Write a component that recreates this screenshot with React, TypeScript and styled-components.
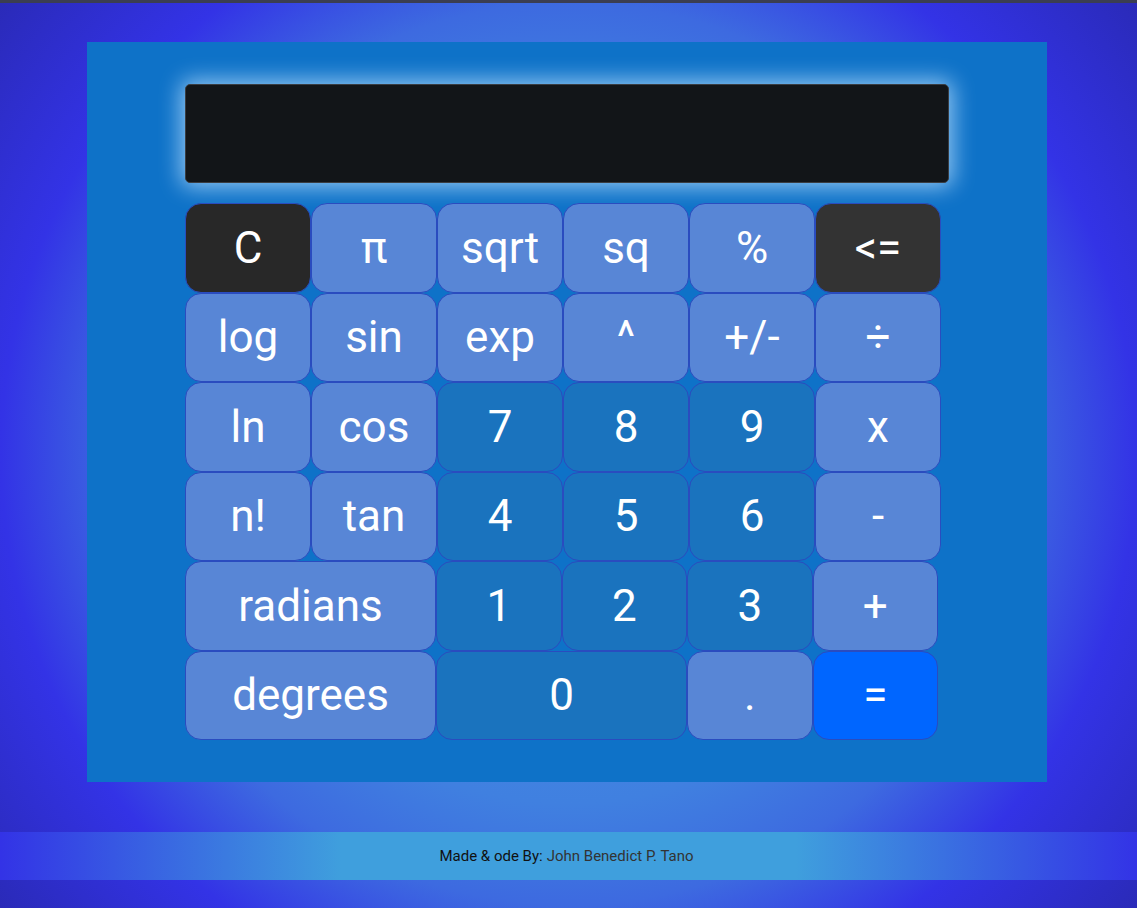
import styled, { createGlobalStyle } from 'styled-components'

const GlobalStyle = createGlobalStyle`
  html, body {
    margin: 0;
    padding: 0;
  }

  body {
    min-height: 100vh;
    box-sizing: border-box;
    border-top: 3px solid #3b3e52;
    font-family: Roboto, 'Liberation Sans', sans-serif;
    background: radial-gradient(
      circle at 50% 50%,
      #4a95e2 0%,
      #4080e0 48%,
      #3d6ae0 62%,
      #3333e6 78%,
      #2a2ab8 100%
    );
    background-attachment: fixed;
  }
`

const Page = styled.div`
  display: flex;
  flex-direction: column;
  align-items: center;
  padding-top: 39px;
`

const Calculator = styled.div`
  width: 960px;
  margin-right: 3px;
  box-sizing: border-box;
  padding: 42px 98px;
  background: #0e72c8;
  display: flex;
  flex-direction: column;
  gap: 20px;
`

const Display = styled.div`
  height: 99px;
  box-sizing: border-box;
  background: #121518;
  border: 1px solid #3a3d42;
  border-radius: 5px;
  box-shadow: 0 0 22px 4px rgba(190, 225, 255, 0.75);
`

const Keypad = styled.div`
  display: flex;
  flex-direction: column;
`

const Row = styled.div`
  display: flex;
`

type Kind = 'fn' | 'num' | 'clear' | 'back' | 'equals'

const colors: Record<Kind, string> = {
  fn: '#5886d6',
  num: '#1a73be',
  clear: '#282828',
  back: '#333333',
  equals: '#0066ff',
}

const Key = styled.button<{ $kind: Kind; $w: number }>`
  width: ${({ $w }) => $w}px;
  height: 89.5px;
  flex: 0 0 auto;
  box-sizing: border-box;
  border: 1px solid #2a4cbf;
  border-radius: 16px;
  background: ${({ $kind }) => colors[$kind]};
  color: #ffffff;
  font-family: Roboto, 'Liberation Sans', sans-serif;
  font-size: 44px;
  padding: 0;
  line-height: 1;
  cursor: pointer;
`

const Footer = styled.footer`
  margin-top: 50px;
  align-self: stretch;
  height: 48px;
  padding-right: 4px;
  display: flex;
  align-items: center;
  justify-content: center;
  background: linear-gradient(
    to right,
    #3333e6 0%,
    #3f9fdd 30%,
    #3f9fdd 70%,
    #3333e6 100%
  );
  font-size: 15px;
  color: #111111;
`

const Author = styled.span`
  color: #333333;
  margin-left: 4px;
`

type KeyDef = [string, Kind, number?]

const rows: KeyDef[][] = [
  [['C', 'clear'], ['π', 'fn'], ['sqrt', 'fn'], ['sq', 'fn'], ['%', 'fn'], ['<=', 'back']],
  [['log', 'fn'], ['sin', 'fn'], ['exp', 'fn'], ['^', 'fn'], ['+/-', 'fn'], ['÷', 'fn']],
  [['ln', 'fn'], ['cos', 'fn'], ['7', 'num'], ['8', 'num'], ['9', 'num'], ['x', 'fn']],
  [['n!', 'fn'], ['tan', 'fn'], ['4', 'num'], ['5', 'num'], ['6', 'num'], ['-', 'fn']],
  [['radians', 'fn', 251], ['1', 'num'], ['2', 'num'], ['3', 'num'], ['+', 'fn']],
  [['degrees', 'fn', 251], ['0', 'num', 251], ['.', 'fn'], ['=', 'equals']],
]

export default function App() {
  return (
    <>
      <GlobalStyle />
      <Page>
        <Calculator>
          <Display />
          <Keypad>
            {rows.map((row, i) => (
              <Row key={i}>
                {row.map(([label, kind, w]) => (
                  <Key key={label} $kind={kind} $w={w ?? (i < 4 ? 126 : 125.5)}>
                    {label}
                  </Key>
                ))}
              </Row>
            ))}
          </Keypad>
        </Calculator>
        <Footer>
          Made &amp; ode By:<Author>John Benedict P. Tano</Author>
        </Footer>
      </Page>
    </>
  )
}
